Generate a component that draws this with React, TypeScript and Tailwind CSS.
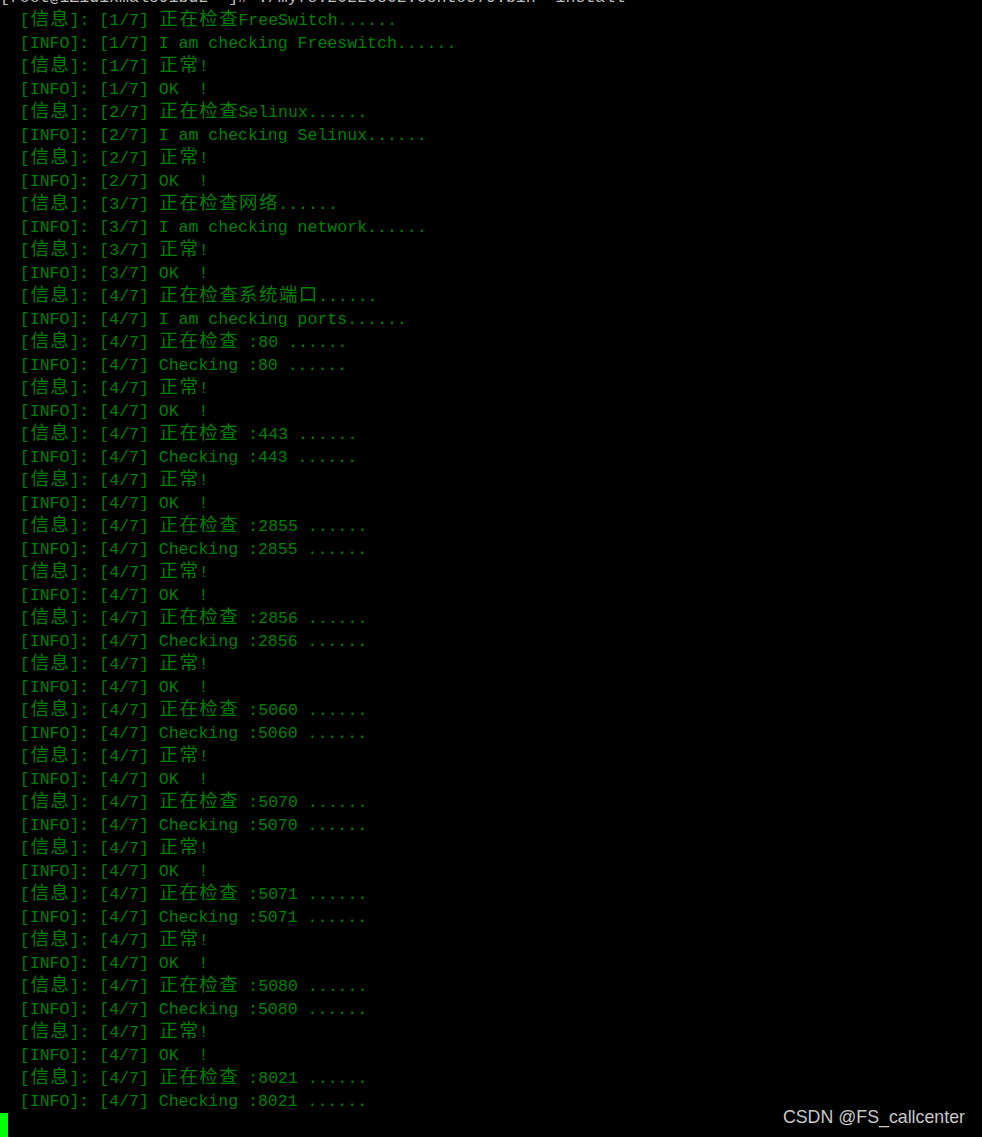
import React from 'react';

const ports = ['80', '443', '2855', '2856', '5060', '5070', '5071', '5080'];

const buildLines = (): string[] => {
  const lines: string[] = [
    '  [信息]: [1/7] 正在检查FreeSwitch......',
    '  [INFO]: [1/7] I am checking Freeswitch......',
    '  [信息]: [1/7] 正常!',
    '  [INFO]: [1/7] OK  !',
    '  [信息]: [2/7] 正在检查Selinux......',
    '  [INFO]: [2/7] I am checking Selinux......',
    '  [信息]: [2/7] 正常!',
    '  [INFO]: [2/7] OK  !',
    '  [信息]: [3/7] 正在检查网络......',
    '  [INFO]: [3/7] I am checking network......',
    '  [信息]: [3/7] 正常!',
    '  [INFO]: [3/7] OK  !',
    '  [信息]: [4/7] 正在检查系统端口......',
    '  [INFO]: [4/7] I am checking ports......',
  ];
  ports.forEach((p) => {
    lines.push(`  [信息]: [4/7] 正在检查 :${p} ......`);
    lines.push(`  [INFO]: [4/7] Checking :${p} ......`);
    lines.push('  [信息]: [4/7] 正常!');
    lines.push('  [INFO]: [4/7] OK  !');
  });
  lines.push('  [信息]: [4/7] 正在检查 :8021 ......');
  lines.push('  [INFO]: [4/7] Checking :8021 ......');
  return lines;
};

const isWide = (ch: string) => /[\u3000-\u9fff\uff00-\uffef]/.test(ch);

// wide chars take two terminal cells
const TermLine: React.FC<{ text: string; className?: string }> = ({ text, className }) => {
  const parts: React.ReactNode[] = [];
  let buf = '';
  Array.from(text).forEach((ch, i) => {
    if (isWide(ch)) {
      if (buf) {
        parts.push(buf);
        buf = '';
      }
      parts.push(
        <span key={i} className="inline-block w-[19.9px] text-center text-[18.5px] leading-[23px] align-top">
          {ch}
        </span>
      );
    } else {
      buf += ch;
    }
  });
  if (buf) parts.push(buf);
  return <div className={`h-[23px] leading-[23px] whitespace-pre ${className ?? ''}`}>{parts}</div>;
};

const App: React.FC = () => {
  const lines = buildLines();

  return (
    <div className="relative w-[982px] h-[1137px] overflow-hidden bg-black">
      <div className="mt-[-14px] font-['Liberation_Mono','Noto_Sans_CJK_SC',monospace] text-[16.55px] text-[#008000]">
        <TermLine text="[root@iZ1dixmale9ibdz ~]# ./myfs.20220802.centos79.bin  install" className="text-[#c0c0c0]" />
        {lines.map((l, i) => (
          <TermLine key={i} text={l} />
        ))}
        <div className="h-[23px]">
          <div className="w-[8px] h-[26px] bg-[#00ff00]" />
        </div>
      </div>

      {/* watermark */}
      <div className="absolute right-[17px] bottom-[6px] font-['Liberation_Sans',sans-serif] text-[17.8px] text-[#c8c8c8]">
        CSDN @FS_callcenter
      </div>
    </div>
  );
};

export default App;
